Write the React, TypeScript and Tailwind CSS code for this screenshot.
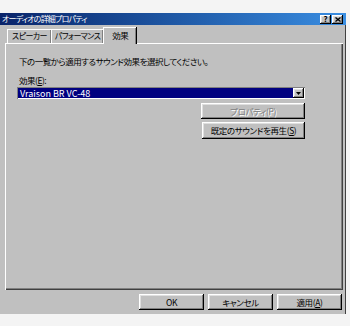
import React from "react";

const raised =
  "shadow-[inset_-1px_-1px_#000,inset_1px_1px_#fff,inset_-2px_-2px_#808080,inset_2px_2px_#dfdfdf]";

interface BtnProps {
  children: React.ReactNode;
  className?: string;
  disabled?: boolean;
}

const Button: React.FC<BtnProps> = ({ children, className = "", disabled }) => (
  <div
    className={`flex items-center justify-center bg-[#c0c0c0] text-[8.5px] leading-none tracking-[-0.4px] ${raised} ${
      disabled ? "text-[#808080] [text-shadow:1px_1px_#fff]" : "text-black"
    } ${className}`}
  >
    {children}
  </div>
);

const Tab: React.FC<{ label: string; active?: boolean; className?: string }> = ({ label, active, className = "" }) =>
  active ? (
    <div className="relative z-10 -mx-[2px] -mb-[1px] flex h-[17px] items-start border-l border-t border-l-white border-t-white bg-[#c0c0c0] px-[8px] pt-[3px] text-[8.5px] leading-none tracking-[-0.5px] shadow-[inset_-1px_0_#808080,1px_0_#000]">
      {label}
    </div>
  ) : (
    <div className={`flex h-[14px] items-start border-l border-t border-l-white border-t-white pt-[2px] text-[8px] leading-none tracking-[-0.6px] shadow-[inset_-1px_0_#808080,1px_0_#000] ${className}`}>
      {label}
    </div>
  );

const App: React.FC = () => {
  return (
    <div className="h-[326px] w-[350px] bg-[#f4f4f4] pt-[13px] font-['Noto_Sans_CJK_JP',sans-serif] [font-feature-settings:'palt'] text-black">
      <div className="flex h-[301px] w-[346px] flex-col bg-[#c0c0c0] shadow-[inset_-1px_0_#404040]">
        {/* title bar */}
        <div className="flex h-[12px] items-center justify-between bg-gradient-to-r from-[#0a246a] to-[#3a8ee2] pl-[2px] pr-[3px]">
          <span className="text-[8px] leading-none tracking-[-0.8px] text-white">オーディオの詳細プロパティ</span>
          <div className="flex gap-[1px]">
            <div className={`flex h-[9px] w-[11px] items-center justify-center bg-[#c0c0c0] text-[8px] font-bold leading-none ${raised}`}>?</div>
            <div className={`flex h-[9px] w-[11px] items-center justify-center bg-[#c0c0c0] ${raised}`}>
              <svg width="6" height="5" viewBox="0 0 6 5">
                <path d="M0.5 0.5L5.5 4.5M5.5 0.5L0.5 4.5" stroke="#000" strokeWidth="1.3" />
              </svg>
            </div>
          </div>
        </div>

        <div className="flex flex-col px-[5px] pt-[2px]">
          {/* tabs */}
          <div className="flex h-[16px] items-end pl-[2px]">
            <Tab label="スピーカー" className="px-[4px]" />
            <Tab label="パフォーマンス" className="px-[3px]" />
            <div className="ml-[2px]">
              <Tab label="効果" active />
            </div>
          </div>

          {/* panel */}
          <div className="flex h-[247px] w-[338px] flex-col border-l border-t border-l-white border-t-white pl-[11px] pt-[12px] shadow-[inset_-1px_-1px_#404040,inset_-2px_-2px_#808080]">
            <p className="pl-[2px] text-[8.5px] leading-[10px] tracking-[-0.5px]">
              下の一覧から適用するサウンド効果を選択してください。
            </p>
            <p className="mt-[9px] pl-[2px] text-[8.5px] leading-[10px] tracking-[-0.5px]">
              効果(<span className="underline">E</span>):
            </p>
            <div className="mt-[2px] flex h-[12px] w-[288px] items-stretch bg-white p-[1px] shadow-[inset_1px_1px_#808080,inset_-1px_-1px_#fff]">
              <div className="flex flex-1 items-center bg-[#000080] pl-[2px] text-[9px] leading-none text-white">
                Vraison BR VC-48
              </div>
              <div className={`flex w-[11px] items-center justify-center bg-[#c0c0c0] ${raised}`}>
                <svg width="5" height="3" viewBox="0 0 5 3">
                  <path d="M0 0h5L2.5 3z" fill="#000" />
                </svg>
              </div>
            </div>
            <div className="mt-[4px] flex w-[288px] flex-col items-end gap-[3px]">
              <Button disabled className="h-[16px] w-[104px]">
                プロパティ(P)
              </Button>
              <Button className="h-[17px] w-[103px]">
                既定のサウンドを再生(<span className="underline">S</span>)
              </Button>
            </div>
          </div>
        </div>

        {/* bottom buttons */}
        <div className="mt-[4px] flex justify-end gap-[4px] pr-[4px]">
          <Button className="h-[16px] w-[65px]">OK</Button>
          <Button className="h-[16px] w-[65px]">キャンセル</Button>
          <Button className="h-[16px] w-[65px]">
            適用(<span className="underline">A</span>)
          </Button>
        </div>
      </div>
    </div>
  );
};

export default App;
